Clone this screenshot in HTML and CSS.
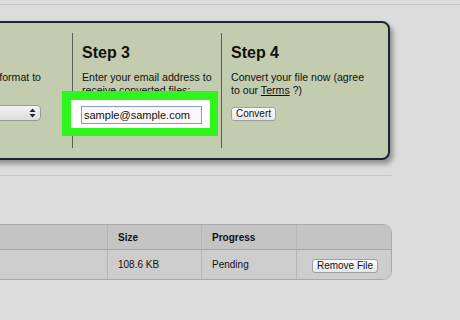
FILE: index.html
```html
<!DOCTYPE html>
<html lang="en">
<head>
    <meta charset="UTF-8">
    <title>File Converter</title>
    <link rel="stylesheet" href="styles.css">
</head>
<body>
<div class="rule top-rule"></div>

<div class="steps">
    <div class="step step-left">
        <h2>Step 2</h2>
        <p>Choose the format to</p>
        <div class="select">
            <span class="select-value">mp3</span>
            <svg class="arrows" width="7" height="10" viewBox="0 0 7 10">
                <path d="M3.5 0.5 L6.5 4 L0.5 4 Z M3.5 9.5 L6.5 6 L0.5 6 Z" fill="#222"/>
            </svg>
        </div>
    </div>
    <div class="step step-email">
        <h2>Step 3</h2>
        <p>Enter your email address to receive converted files:</p>
        <div class="highlight">
            <input class="email" type="text" value="sample@sample.com">
        </div>
    </div>
    <div class="step step-last">
        <h2>Step 4</h2>
        <p>Convert your file now (agree to our <a href="#">Terms</a> ?)</p>
        <button class="btn">Convert</button>
    </div>
</div>

<div class="rule mid-rule"></div>

<div class="files">
    <div class="cell head"></div>
    <div class="cell head">Size</div>
    <div class="cell head">Progress</div>
    <div class="cell head last"></div>
    <div class="cell"></div>
    <div class="cell">108.6 KB</div>
    <div class="cell">Pending</div>
    <div class="cell last center"><button class="btn">Remove File</button></div>
</div>
</body>
</html>
```

FILE: styles.css
```css
body {
    margin: 0;
    padding-top: 4px;
    background-color: #dcdcdc;
    font-family: "Liberation Sans", Arial, sans-serif;
    color: #111;
    overflow: hidden;
}
.rule {
    height: 1px;
    background-color: #c6c6c6;
}
.mid-rule {
    width: 392px;
    margin-top: 15px;
}

/* steps panel */
.steps {
    display: flex;
    width: 480px;
    height: 139px;
    margin: 16px 0 0 -90px;
    padding: 10px 0 0;
    box-sizing: border-box;
    background-color: #c3ccae;
    border: 2px solid #1d2536;
    border-radius: 8px;
    box-shadow: 3px 4px 5px rgba(0,0,0,0.35);
}
.step {
    flex: none;
    height: 115px;
    padding: 0 9px;
    box-sizing: border-box;
    border-left: 1px solid #5a5f55;
}
.step:first-child { border-left: none; }
.step-left {
    width: 160px;
    text-align: right;
    padding-right: 31px;
}
.step-left h2 { text-align: left; }
.step-email {
    position: relative;
    width: 149px;
}
.step-last { flex: 1; }
.step-last p { max-width: 140px; }
.step h2 {
    margin: 11px 0 9px;
    font-size: 16px;
    line-height: 18px;
}
.step p {
    margin: 0;
    font-size: 10.6px;
    line-height: 13px;
}
.step a { color: #111; }

.select {
    display: flex;
    align-items: center;
    justify-content: space-between;
    margin: 21px 0 0 auto;
    width: 120px;
    height: 16px;
    padding: 0 4px;
    box-sizing: border-box;
    background: linear-gradient(#f4f4f4, #dcdcdc);
    border: 1px solid #9a9a9a;
    border-radius: 4px;
    font-size: 10px;
    text-align: left;
}

/* green highlight over the email field */
.highlight {
    position: absolute;
    left: -11px;
    top: 58px;
    width: 156px;
    height: 45px;
    padding: 6px 0 0 10px;
    box-sizing: border-box;
    background-color: #fff;
    border: 9px solid #2ef51c;
    border-bottom-width: 8px;
    border-right-width: 8px;
}
.email {
    display: block;
    width: 121px;
    height: 18px;
    margin: 0;
    padding: 0 2px;
    box-sizing: border-box;
    border: 1px solid #7e9fc6;
    font-family: "Liberation Sans", Arial, sans-serif;
    font-size: 11px;
    color: #111;
    background-color: #fbf6f8;
}

.btn {
    height: 14px;
    padding: 0 4px;
    background: linear-gradient(#fdfdfd, #e6e6e6);
    border: 1px solid #a0a0a0;
    border-radius: 3px;
    font-family: "Liberation Sans", Arial, sans-serif;
    font-size: 10px;
    line-height: 12px;
    color: #111;
}
.step .btn { margin-top: 10px; }

/* file list */
.files {
    display: grid;
    grid-template-columns: 146px 94px 95px 97px;
    grid-template-rows: 25px 29px;
    width: 432px;
    margin: 48px 0 0 -40px;
    box-sizing: border-box;
    border: 1px solid #a9a9a9;
    border-radius: 0 9px 9px 0;
    overflow: hidden;
    font-size: 10px;
}
.cell {
    display: flex;
    align-items: center;
    padding: 0 10px;
    background-color: #cdcdcd;
    border-left: 1px solid #b6b6b6;
}
.cell:nth-child(4n+1) { border-left: none; }
.head {
    background-color: #c4c4c4;
    border-bottom: 1px solid #a6a6a6;
    font-weight: bold;
}
.center { justify-content: center; }
.cell .btn { margin-top: 2px; }
```
